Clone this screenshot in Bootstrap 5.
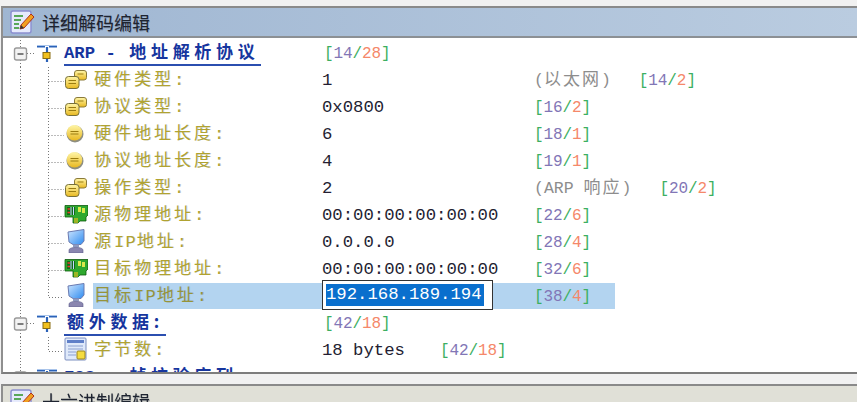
<!DOCTYPE html>
<html lang="zh"><head><meta charset="utf-8"><title>详细解码编辑</title>
<link href="https://cdn.jsdelivr.net/npm/bootstrap@5.3.0/dist/css/bootstrap.min.css" rel="stylesheet">
<style>
html,body{margin:0;height:402px;overflow:hidden;background:#f1f1f1}
.shot{height:402px;padding-top:6px;overflow:hidden;filter:blur(.35px)}
.defs{position:absolute;width:0;height:0}
.pane-a{height:368px;margin-left:1px;border-left:2px solid #8f8f8f;border-top:2px solid #8a8a8a;border-bottom:2px solid #7d7d7d;background:#fff;overflow:hidden}
.pane-b{margin-top:10px;margin-left:1px;height:30px;border-left:2px solid #8f8f8f;border-top:2px solid #8a8a8a;background:#e0e0d7}
.head{height:30px;padding-left:6px;gap:7px;background:linear-gradient(90deg,#9fb6d2,#bacce0);border-bottom:2px solid #8c9094}
.pane-b .head{background:none;border:0}
.head-txt{font:18px "Noto Sans CJK SC",sans-serif;color:#1e2430;line-height:1;text-shadow:.5px .5px 0 rgba(40,50,70,.35)}
.rows{padding-top:2px}
.tr{height:27px;white-space:nowrap}
.tree{width:319px;height:27px;flex:none}
.gd-r{width:33px;height:27px;flex:none}
.gd-c{width:61px;height:27px;flex:none}
.ic-r{width:22px;height:20px;flex:none}
.ic-c{width:24px;height:24px;flex:none;margin-bottom:3px}
.lab{margin-left:6px;font:17px/24px "Liberation Mono","Noto Sans CJK SC",monospace;letter-spacing:3px;color:#b0a331;text-shadow:.7px .3px 0 rgba(70,110,190,.3)}
.asc{letter-spacing:1.2px}
.root-lab{margin-bottom:0;margin-top:0;font:700 17.3px/20px "Liberation Mono","Noto Sans CJK SC",monospace;color:#16359e;border-bottom:2px solid #2b4fb0;letter-spacing:0;padding-right:2px;text-shadow:none}
.root-lab b{font:700 17px/20px "Noto Sans CJK SC",sans-serif;letter-spacing:4.7px;padding-left:3px}
.val{width:212px;flex:none;font:17.3px/27px "Liberation Mono",monospace;color:#241e32}
.root-off{padding-left:2px}
.off{font:16px/28px "Liberation Mono",monospace;letter-spacing:-.1px;color:#8276b6}
.off i{font-style:normal;color:#3caf62}
.off u{text-decoration:none;color:#f5886a}
.note{font:16.5px/27px "Liberation Mono","Noto Sans CJK SC",monospace;color:#8d8d8d;margin-right:28px}
.note em{font-style:normal;font-size:17px;letter-spacing:2px}
.sel-row{background:linear-gradient(#b3d4f0,#b3d4f0) 90px -1px/522px 27px no-repeat}
.sel-row .lab{color:#96943a}
.ed-cell{width:212px;flex:none}
.editor{width:171px;height:30px;margin-top:-3px;border:1px solid #333;background:#fff;padding:3px 0 3px 3px}
.editor span{display:block;width:158px;height:22px;background:#0a6fcd;color:#fff;font:17.3px/22px "Liberation Mono",monospace}
.bytes{width:118px}
</style></head><body>
<svg class="defs" aria-hidden="true"><defs>
<linearGradient id="gy" x1="0" y1="0" x2="0" y2="1"><stop offset="0" stop-color="#fff6a8"/><stop offset="1" stop-color="#e8b820"/></linearGradient>
<linearGradient id="gb" x1="0" y1="0" x2="1" y2="1"><stop offset="0" stop-color="#cfe6ff"/><stop offset="1" stop-color="#2f8cf0"/></linearGradient>
<symbol id="g-root" viewBox="0 0 33 27"><path d="M17.5 0V8M17.5 20V27M24 13.500H33" stroke="#777" stroke-dasharray="1 2" fill="none"/><rect x="11.500" y="8" width="12" height="12" rx="2" fill="#f2f2f2" stroke="#999" stroke-width="1.400"/><path d="M14.500 14H20.500" stroke="#555" stroke-width="1.500"/></symbol>
<symbol id="g-mid" viewBox="0 0 61 27"><path d="M17.500 0V27M45.500 0V27M45.500 14.500H61" stroke="#777" stroke-dasharray="1 2" fill="none"/></symbol>
<symbol id="g-last" viewBox="0 0 61 27"><path d="M17.500 0V27M45.500 0V14.500H61" stroke="#777" stroke-dasharray="1 2" fill="none"/></symbol>
<symbol id="i-net" viewBox="0 0 22 20"><path d="M1 2.500H9M13 2.500H21M11 3V18" stroke="#2b62b8" stroke-width="2.200" fill="none"/><path d="M1 1.500H21" stroke="#a9c4ea" stroke-width="1"/><rect x="7" y="8.500" width="7" height="6" fill="#f0c020" stroke="#8a6c10"/></symbol>
<symbol id="i-stack" viewBox="0 0 24 24"><rect x="10.500" y="3.500" width="12" height="9.500" rx="2.500" fill="url(#gy)" stroke="#8a7a3a"/><path d="M13.500 7H19.500" stroke="#9a7c10"/><rect x="1.500" y="9.500" width="13.500" height="12" rx="3" fill="url(#gy)" stroke="#77703a"/><path d="M4.500 13.500H12M4.500 16.500H12" stroke="#9a7c10"/></symbol>
<symbol id="i-coin" viewBox="0 0 24 24"><circle cx="11" cy="13" r="8.500" fill="#8e8e80"/><circle cx="10.500" cy="11.800" r="7.800" fill="url(#gy)"/><path d="M6.500 10.500H14.500M6.500 13H14.500" stroke="#9a7c10"/></symbol>
<symbol id="i-card" viewBox="0 0 24 24"><path d="M1 3.500H24V13L22 15V19H16L14 21H9V15H1Z" fill="#2ea82e" stroke="#0e5a0e" stroke-width=".8"/><path d="M3 5H11V13H3Z" fill="#0e6a1a"/><path d="M3.500 7H6M3.500 10.500H6" stroke="#e83a2a" stroke-width="1.500"/><path d="M7 5V13M9.500 5V13" stroke="#c8d8ff"/><path d="M14 5H17V10H14ZM18 6H21V11H18Z" fill="#d8e84a"/><path d="M11 16V21M13 16V21" stroke="#e8c020" stroke-width="1.200"/></symbol>
<symbol id="i-pc" viewBox="0 0 24 24"><path d="M4 3L20 0.500V12L17 15.500H9L5 13Z" fill="url(#gb)" stroke="#6a7ab0"/><path d="M9 15.500H15V18.500H9Z" fill="#8f9ac0"/><path d="M5 21C5 17.500 19 17.500 19 21V24H5Z" fill="#8a86b0" stroke="#5a5a8a" stroke-width=".6"/></symbol>
<symbol id="i-doc" viewBox="0 0 24 24"><rect x="1" y="1" width="21" height="22" rx="1" fill="#dfe9fa" stroke="#7d8fc0"/><rect x="3" y="3" width="17" height="3" fill="#5f7fc8"/><path d="M4 9H19M4 12H19M4 15H12M4 18H12" stroke="#8ba0d0"/><rect x="13" y="14" width="8" height="8" rx="1" fill="#f5dc40" stroke="#9a8420"/></symbol>
<symbol id="i-edit" viewBox="0 0 26 26"><rect x="2" y="2" width="20" height="22" rx="2" fill="#e6eafc" stroke="#8a8ed0" stroke-width="1.400"/><path d="M5 7H14M5 11H12M5 15H10M5 19H10" stroke="#5aa85a" stroke-width="1.800"/><path d="M11 20L12 16L22 5L25 8L15 19Z" fill="#f0a020" stroke="#b03018" stroke-width="1"/><path d="M11 20L12 16L15 19Z" fill="#333"/></symbol>
</defs></svg>
<main class="shot">
<section class="pane-a">
 <header class="head d-flex align-items-center"><svg width="26" height="26" aria-hidden="true"><use href="#i-edit"/></svg><span class="head-txt">详细解码编辑</span></header>
 <div class="rows">
  <div class="tr d-flex align-items-center"><div class="tree d-flex align-items-center"><svg class="gd-r"><use href="#g-root"/></svg><svg class="ic-r"><use href="#i-net"/></svg><span class="lab root-lab">ARP - <b>地址解析协议</b></span></div><div class="off root-off"><i>[</i>14<i>/</i><u>28</u><i>]</i></div></div>

  <div class="tr d-flex align-items-center"><div class="tree d-flex align-items-center"><svg class="gd-c"><use href="#g-mid"/></svg><svg class="ic-c"><use href="#i-stack"/></svg><span class="lab">硬件类型:</span></div><div class="val">1</div><span class="note">(<em>以太网</em>)</span><div class="off"><i>[</i>14<i>/</i><u>2</u><i>]</i></div></div>
  <div class="tr d-flex align-items-center"><div class="tree d-flex align-items-center"><svg class="gd-c"><use href="#g-mid"/></svg><svg class="ic-c"><use href="#i-stack"/></svg><span class="lab">协议类型:</span></div><div class="val">0x0800</div><div class="off"><i>[</i>16<i>/</i><u>2</u><i>]</i></div></div>
  <div class="tr d-flex align-items-center"><div class="tree d-flex align-items-center"><svg class="gd-c"><use href="#g-mid"/></svg><svg class="ic-c"><use href="#i-coin"/></svg><span class="lab">硬件地址长度:</span></div><div class="val">6</div><div class="off"><i>[</i>18<i>/</i><u>1</u><i>]</i></div></div>
  <div class="tr d-flex align-items-center"><div class="tree d-flex align-items-center"><svg class="gd-c"><use href="#g-mid"/></svg><svg class="ic-c"><use href="#i-coin"/></svg><span class="lab">协议地址长度:</span></div><div class="val">4</div><div class="off"><i>[</i>19<i>/</i><u>1</u><i>]</i></div></div>
  <div class="tr d-flex align-items-center"><div class="tree d-flex align-items-center"><svg class="gd-c"><use href="#g-mid"/></svg><svg class="ic-c"><use href="#i-stack"/></svg><span class="lab">操作类型:</span></div><div class="val">2</div><span class="note">(ARP <em>响应</em>)</span><div class="off"><i>[</i>20<i>/</i><u>2</u><i>]</i></div></div>
  <div class="tr d-flex align-items-center"><div class="tree d-flex align-items-center"><svg class="gd-c"><use href="#g-mid"/></svg><svg class="ic-c"><use href="#i-card"/></svg><span class="lab">源物理地址:</span></div><div class="val">00:00:00:00:00:00</div><div class="off"><i>[</i>22<i>/</i><u>6</u><i>]</i></div></div>
  <div class="tr d-flex align-items-center"><div class="tree d-flex align-items-center"><svg class="gd-c"><use href="#g-mid"/></svg><svg class="ic-c"><use href="#i-pc"/></svg><span class="lab">源<span class="asc">IP</span>地址:</span></div><div class="val">0.0.0.0</div><div class="off"><i>[</i>28<i>/</i><u>4</u><i>]</i></div></div>
  <div class="tr d-flex align-items-center"><div class="tree d-flex align-items-center"><svg class="gd-c"><use href="#g-mid"/></svg><svg class="ic-c"><use href="#i-card"/></svg><span class="lab">目标物理地址:</span></div><div class="val">00:00:00:00:00:00</div><div class="off"><i>[</i>32<i>/</i><u>6</u><i>]</i></div></div>
  <div class="tr sel-row d-flex align-items-center"><div class="tree d-flex align-items-center"><svg class="gd-c"><use href="#g-last"/></svg><svg class="ic-c"><use href="#i-pc"/></svg><span class="lab">目标<span class="asc">IP</span>地址:</span></div><div class="ed-cell"><div class="editor"><span>192.168.189.194</span></div></div><div class="off"><i>[</i>38<i>/</i><u>4</u><i>]</i></div></div>

  <div class="tr d-flex align-items-center"><div class="tree d-flex align-items-center"><svg class="gd-r"><use href="#g-root"/></svg><svg class="ic-r"><use href="#i-net"/></svg><span class="lab root-lab"><b>额外数据:</b></span></div><div class="off root-off"><i>[</i>42<i>/</i><u>18</u><i>]</i></div></div>
  <div class="tr d-flex align-items-center"><div class="tree d-flex align-items-center"><svg class="gd-c"><use href="#g-last"/></svg><svg class="ic-c"><use href="#i-doc"/></svg><span class="lab">字节数:</span></div><div class="val d-flex"><span class="bytes">18 bytes</span><div class="off"><i>[</i>42<i>/</i><u>18</u><i>]</i></div></div></div>
  <div class="tr d-flex align-items-center"><div class="tree d-flex align-items-center"><svg class="gd-r"><use href="#g-root"/></svg><svg class="ic-r"><use href="#i-net"/></svg><span class="lab root-lab">FCS - <b>帧校验序列</b></span></div></div>
 </div>
</section>
<section class="pane-b"><header class="head d-flex align-items-center"><svg width="26" height="26" aria-hidden="true"><use href="#i-edit"/></svg><span class="head-txt">十六进制编辑</span></header></section>
</main>
</body></html>
